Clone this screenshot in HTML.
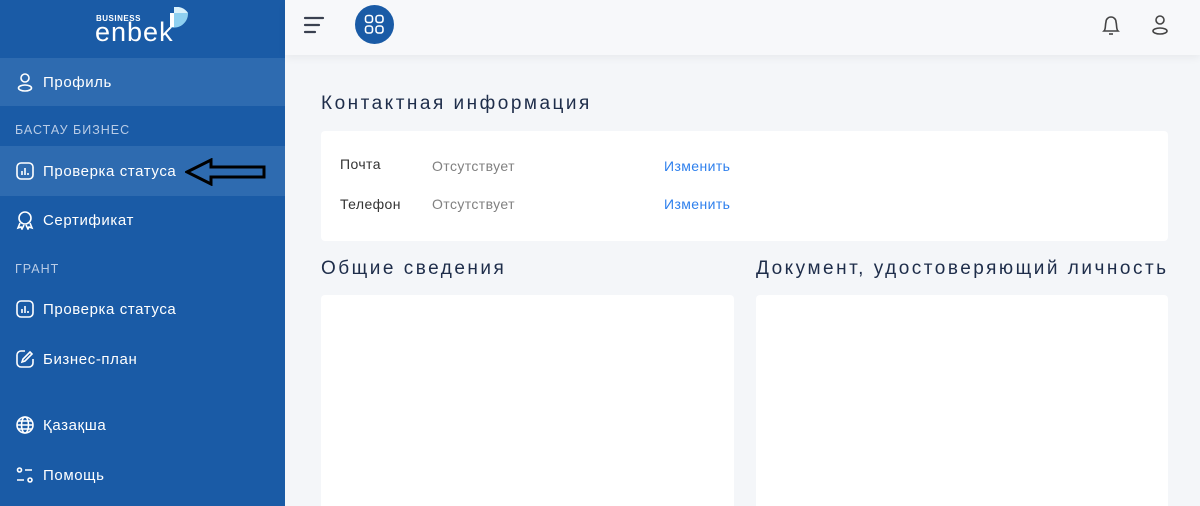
<!DOCTYPE html>
<html><head><meta charset="utf-8"><style>
*{margin:0;padding:0;box-sizing:border-box}
html,body{width:1200px;height:506px;overflow:hidden}
body{background:#f4f6f9;font-family:"Liberation Sans",sans-serif;position:relative}
.sb{position:absolute;left:0;top:0;width:285px;height:506px;background:#1a5ba6;color:#fff}
.item{position:absolute;left:0;width:285px;height:48px;display:flex;align-items:center;padding-left:16px;font-size:15px;letter-spacing:.6px}
.item svg{margin-right:9px}
.hl{background:#2e6bb0}
.sec{position:absolute;left:15px;font-size:12.5px;letter-spacing:1px;color:#b9cce6}
.hdr{position:absolute;left:285px;top:0;right:0;height:55px;background:#f7f8fa;box-shadow:0 3px 8px rgba(0,0,0,.05)}
.h2{position:absolute;font-size:19px;color:#1e2d4a;letter-spacing:2.5px}
.card{position:absolute;background:#fff;border-radius:4px}
.t{position:absolute;font-size:14px;letter-spacing:.4px}
</style></head><body>
<div class="sb">
  <div style="position:absolute;left:96px;top:14px;font-size:8px;font-weight:bold;letter-spacing:.5px">BUSINESS</div>
  <div style="position:absolute;left:95px;top:17px;font-size:27px;letter-spacing:1px">enbek</div>
  <svg style="position:absolute;left:166px;top:7px" width="24" height="28" viewBox="0 0 24 28"><path d="M4 20 A14 14 0 0 0 22 6 L8 6 Z" fill="#8fd0f0"/><path d="M8 6 L8 0 A14 14 0 0 1 22 6Z" fill="#d9f1fb"/><rect x="4" y="6" width="4" height="14" fill="#fff"/></svg>
  <div class="item hl" style="top:58px;height:48px"><svg width="18" height="20" viewBox="0 0 18 20" fill="none" stroke="#fff" stroke-width="1.6"><circle cx="9" cy="6" r="4"/><ellipse cx="9" cy="16" rx="6.5" ry="3"/></svg>Профиль</div>
  <div class="sec" style="top:123px">БАСТАУ БИЗНЕС</div>
  <div class="item hl" style="top:146px;height:50px"><svg width="18" height="18" viewBox="0 0 18 18" fill="none" stroke="#fff" stroke-width="1.6"><rect x="1" y="1" width="16" height="16" rx="4"/><path d="M6 13V9M9 13V6M12 13v-2"/></svg>Проверка статуса</div>
  <svg style="position:absolute;left:185px;top:158px" width="82" height="28" viewBox="0 0 82 28"><path d="M2 14 L26 2 L26 9 L79 9 L79 19 L26 19 L26 26 Z" fill="none" stroke="#000" stroke-width="3" stroke-linejoin="miter"/></svg>
  <div class="item" style="top:196px"><svg width="18" height="20" viewBox="0 0 18 20" fill="none" stroke="#fff" stroke-width="1.6"><circle cx="9" cy="8" r="6"/><path d="M4 13l-2 5 3-1 1 2 2-4M14 13l2 5-3-1-1 2-2-4"/></svg>Сертификат</div>
  <div class="sec" style="top:262px">ГРАНТ</div>
  <div class="item" style="top:285px"><svg width="18" height="18" viewBox="0 0 18 18" fill="none" stroke="#fff" stroke-width="1.6"><rect x="1" y="1" width="16" height="16" rx="4"/><path d="M6 13V9M9 13V6M12 13v-2"/></svg>Проверка статуса</div>
  <div class="item" style="top:335px"><svg width="18" height="18" viewBox="0 0 18 18" fill="none" stroke="#fff" stroke-width="1.6"><path d="M9 1H5a4 4 0 0 0-4 4v8a4 4 0 0 0 4 4h8a4 4 0 0 0 4-4V9"/><path d="M14 2l2 2-7 7-3 1 1-3z"/></svg>Бизнес-план</div>
  <div class="item" style="top:401px"><svg width="18" height="18" viewBox="0 0 18 18" fill="none" stroke="#fff" stroke-width="1.6"><circle cx="9" cy="9" r="8"/><ellipse cx="9" cy="9" rx="3.5" ry="8"/><path d="M1 9h16M2.5 5h13M2.5 13h13"/></svg>Қазақша</div>
  <div class="item" style="top:451px"><svg width="18" height="18" viewBox="0 0 18 18" fill="none" stroke="#fff" stroke-width="1.6"><circle cx="3.5" cy="4" r="2"/><path d="M9 4h7M1 14h7"/><circle cx="14" cy="14" r="2"/></svg>Помощь</div>
</div>
<div class="hdr">
  <svg style="position:absolute;left:18px;top:16px" width="22" height="18" viewBox="0 0 22 18" stroke="#3a4150" stroke-width="2.2" stroke-linecap="round"><path d="M2 2h18M2 9h14M2 16h10"/></svg>
  <div style="position:absolute;left:70px;top:5px;width:39px;height:39px;border-radius:50%;background:#1a5ba6"></div>
  <svg style="position:absolute;left:79px;top:14px" width="21" height="21" viewBox="0 0 21 21" fill="none" stroke="#fff" stroke-width="1.6"><rect x="1.5" y="1.5" width="7" height="7" rx="2.5"/><rect x="12" y="1.5" width="7" height="7" rx="2.5"/><rect x="1.5" y="12" width="7" height="7" rx="2.5"/><rect x="12" y="12" width="7" height="7" rx="2.5"/></svg>
  <svg style="position:absolute;left:815px;top:14px" width="22" height="24" viewBox="0 0 22 24" fill="none" stroke="#444" stroke-width="1.6"><path d="M4 17c2-2 1-6 2-9a5 5 0 0 1 10 0c1 3 0 7 2 9z"/><path d="M9 20h4"/></svg>
  <svg style="position:absolute;left:865px;top:14px" width="20" height="22" viewBox="0 0 20 22" fill="none" stroke="#444" stroke-width="1.6"><circle cx="10" cy="6" r="4"/><ellipse cx="10" cy="17" rx="7" ry="3"/></svg>
</div>
<div class="h2" style="left:321px;top:93px">Контактная информация</div>
<div class="card" style="left:321px;top:131px;width:847px;height:110px"></div>
<div class="t" style="left:340px;top:156px;color:#333">Почта</div>
<div class="t" style="left:432px;top:158px;color:#808080">Отсутствует</div>
<div class="t" style="left:664px;top:158px;color:#2f80ed">Изменить</div>
<div class="t" style="left:340px;top:196px;color:#333">Телефон</div>
<div class="t" style="left:432px;top:196px;color:#808080">Отсутствует</div>
<div class="t" style="left:664px;top:196px;color:#2f80ed">Изменить</div>
<div class="h2" style="left:321px;top:258px">Общие сведения</div>
<div class="h2" style="left:756px;top:258px">Документ, удостоверяющий личность</div>
<div class="card" style="left:321px;top:295px;width:413px;height:220px"></div>
<div class="card" style="left:756px;top:295px;width:412px;height:220px"></div>
</body></html>
